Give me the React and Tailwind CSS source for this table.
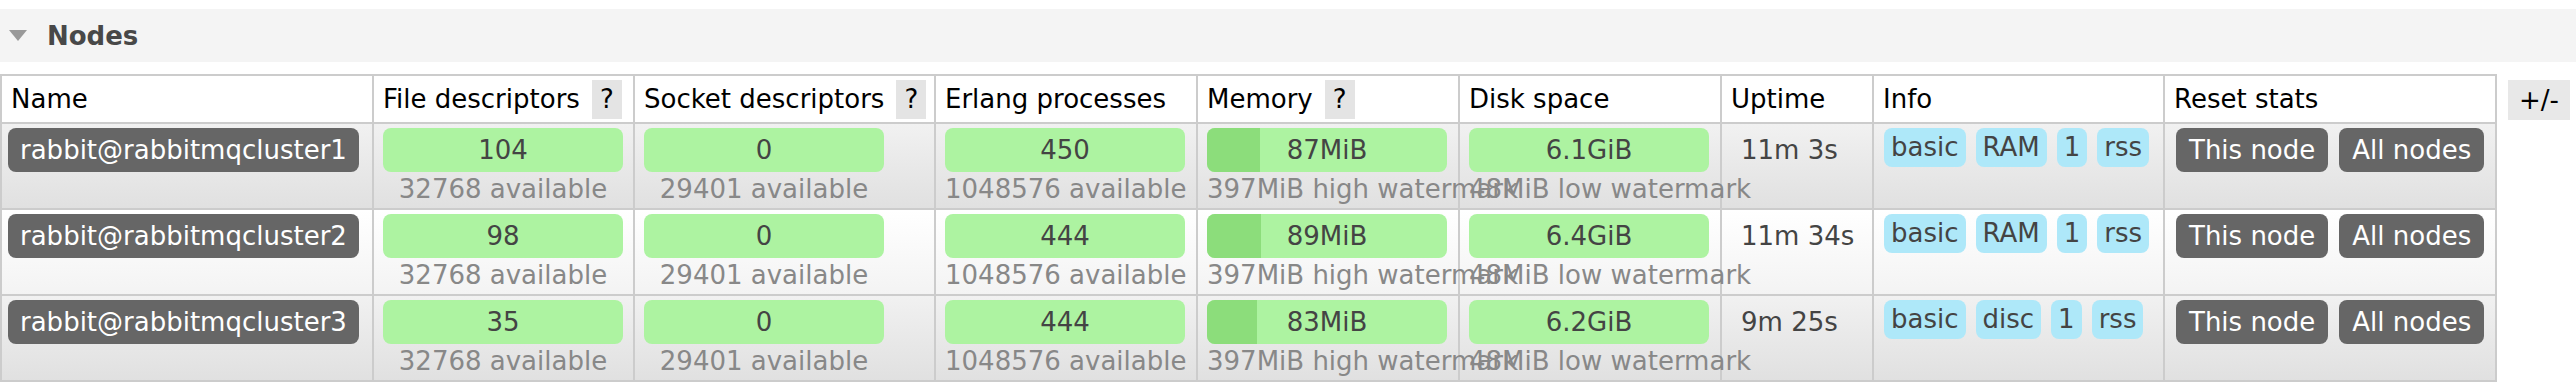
import React from 'react'

const cols = 'grid grid-cols-[372px_261px_301px_262px_262px_262px_152px_291px_332px]'

const nodes = [
  { name: 'rabbit@rabbitmqcluster1', fd: '104', sd: '0', ep: '450', mem: 87, disk: '6.1GiB', up: '11m 3s', info: ['basic', 'RAM', '1', 'rss'] },
  { name: 'rabbit@rabbitmqcluster2', fd: '98', sd: '0', ep: '444', mem: 89, disk: '6.4GiB', up: '11m 34s', info: ['basic', 'RAM', '1', 'rss'] },
  { name: 'rabbit@rabbitmqcluster3', fd: '35', sd: '0', ep: '444', mem: 83, disk: '6.2GiB', up: '9m 25s', info: ['basic', 'disc', '1', 'rss'] },
]

function Help() {
  return <span className="ml-[12px] h-[39px] px-[8px] bg-[#e4e4e4] leading-[38px]">?</span>
}

function Th({ children, help }) {
  return (
    <div className="flex items-start h-[48px] pt-[4px] pl-[9px] border-r-2 border-b-2 border-[#cccccc] text-black whitespace-nowrap">
      <span className="mt-[4px] leading-[30px]">{children}</span>
      {help && <Help />}
    </div>
  )
}

function Bar({ value, sub, fill }) {
  return (
    <div className="w-[240px]">
      <div className="relative h-[44px] rounded-[8px] bg-[#adf3a1] overflow-hidden">
        {fill != null && <div className="absolute left-0 top-0 h-full bg-[#8cdd7b]" style={{ width: fill }} />}
        <div className="relative text-center leading-[44px] text-[#444]">{value}</div>
      </div>
      <div className="whitespace-nowrap text-center leading-[34px] text-[#888]">{sub}</div>
    </div>
  )
}

function Td({ children, className = '' }) {
  return <div className={`h-[86px] pt-[4px] border-r-2 border-b-2 border-[#cccccc] ${className}`}>{children}</div>
}

export default function App() {
  return (
    <div className="w-[2576px] h-[392px] bg-white pt-[9px] text-[26px] font-['DejaVu_Sans',Verdana,sans-serif]">
      <div className="flex items-center h-[53px] bg-[#f4f4f4] pl-[9px]">
        <svg width="18" height="11" viewBox="0 0 18 11"><polygon points="0,0 18,0 9,11" fill="#999" /></svg>
        <span className="ml-[20px] text-[26px] font-bold leading-[30px] text-[#484848]">Nodes</span>
      </div>

      <div className="mt-[12px] flex items-start">
        <div className="border-t-2 border-l-2 border-[#cccccc]">
          <div className={`${cols} bg-white`}>
            <Th>Name</Th>
            <Th help>File descriptors</Th>
            <Th help>Socket descriptors</Th>
            <Th>Erlang processes</Th>
            <Th help>Memory</Th>
            <Th>Disk space</Th>
            <Th>Uptime</Th>
            <Th>Info</Th>
            <Th>Reset stats</Th>
          </div>
          {nodes.map((n, i) => (
            <div
              key={n.name}
              className={`${cols} bg-linear-to-b ${i % 2 === 0 ? 'from-[#f1f1f1] to-[#e0e0e0]' : 'from-white to-[#f3f3f3]'}`}
            >
              <Td className="pl-[6px]">
                <span className="inline-block h-[44px] rounded-[8px] bg-[#666] px-[12px] leading-[44px] text-white whitespace-nowrap">{n.name}</span>
              </Td>
              <Td className="pl-[9px]"><Bar value={n.fd} sub="32768 available" /></Td>
              <Td className="pl-[9px]"><Bar value={n.sd} sub="29401 available" /></Td>
              <Td className="pl-[9px]"><Bar value={n.ep} sub="1048576 available" /></Td>
              <Td className="pl-[9px]"><Bar value={`${n.mem}MiB`} sub="397MiB high watermark" fill={Math.round((n.mem / 397) * 240)} /></Td>
              <Td className="pl-[9px]"><Bar value={n.disk} sub="48MiB low watermark" /></Td>
              <Td className="pl-[19px]">
                <div className="leading-[44px] text-[#444] whitespace-nowrap">{n.up}</div>
              </Td>
              <Td className="pl-[10px]">
                <div className="flex gap-[10px]">
                  {n.info.map((t, j) => (
                    <span key={j} className="h-[39px] rounded-[8px] bg-[#aee8f9] px-[7px] leading-[39px] text-[#444]">{t}</span>
                  ))}
                </div>
              </Td>
              <Td className="pl-[11px]">
                <div className="flex gap-[11px]">
                  <button className="h-[44px] rounded-[8px] bg-[#666] px-[13px] leading-[44px] text-white whitespace-nowrap">This node</button>
                  <button className="h-[44px] rounded-[8px] bg-[#666] px-[13px] leading-[44px] text-white whitespace-nowrap">All nodes</button>
                </div>
              </Td>
            </div>
          ))}
        </div>
        <div className="ml-[11px] mt-[6px] w-[62px] h-[40px] bg-[#e8e8e8] text-center leading-[40px] text-black">+/-</div>
      </div>
    </div>
  )
}
